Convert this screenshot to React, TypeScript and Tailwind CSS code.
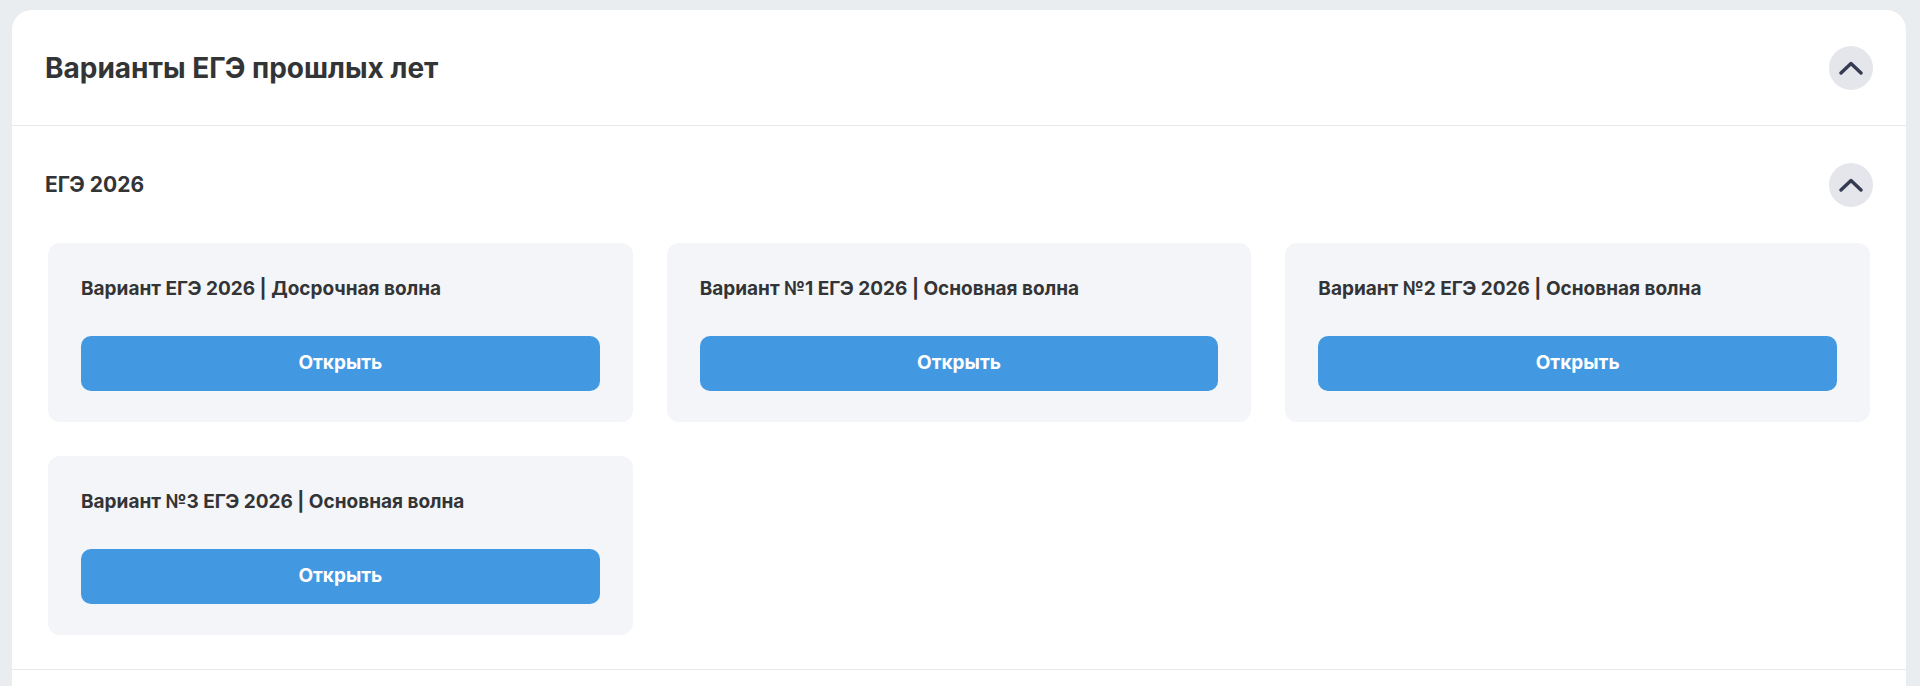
const variants = [
  'Вариант ЕГЭ 2026 | Досрочная волна',
  'Вариант №1 ЕГЭ 2026 | Основная волна',
  'Вариант №2 ЕГЭ 2026 | Основная волна',
  'Вариант №3 ЕГЭ 2026 | Основная волна',
]

function ChevronButton() {
  return (
    <button className="flex h-[44px] w-[44px] shrink-0 items-center justify-center rounded-full bg-[#e4e6eb]">
      <svg width="24" height="14" viewBox="0 0 24 14" fill="none">
        <path d="M2 12 L12 2.5 L22 12" stroke="#353b52" strokeWidth="3.4" strokeLinecap="round" strokeLinejoin="round" />
      </svg>
    </button>
  )
}

function VariantCard({ title }: { title: string }) {
  return (
    <div className="rounded-[12px] bg-[#f3f5f8] px-[33px] pt-[33px] pb-[31px]">
      <div className="text-[19px] leading-[26px] font-bold text-[#333436]">{title}</div>
      <button className="mt-[34px] flex h-[55px] w-full items-center justify-center rounded-[10px] bg-[#4398e2] text-[19px] font-bold text-white">
        Открыть
      </button>
    </div>
  )
}

export default function App() {
  return (
    <div
      className="h-[686px] overflow-hidden bg-[#e9edf0] pt-[10px] pr-[14px] pl-[12px]"
      style={{ fontFamily: 'Inter, "Noto Sans", sans-serif' }}
    >
      <div className="h-[800px] rounded-t-[20px] bg-white">
        {/* заголовок */}
        <div className="flex h-[116px] items-center justify-between border-b border-[#e6e8ec] pr-[33px] pl-[33px]">
          <h1 className="text-[28px] font-bold text-[#333436]">Варианты ЕГЭ прошлых лет</h1>
          <ChevronButton />
        </div>

        {/* ЕГЭ 2026 */}
        <div className="border-b border-[#e6e8ec] pb-[34px]">
          <div className="flex h-[117px] items-center justify-between pr-[33px] pl-[33px]">
            <h2 className="text-[21px] font-bold text-[#333436]">ЕГЭ 2026</h2>
            <ChevronButton />
          </div>
          <div className="grid grid-cols-3 gap-[34px] px-[36px]">
            {variants.map(v => (
              <VariantCard key={v} title={v} />
            ))}
          </div>
        </div>
      </div>
    </div>
  )
}
